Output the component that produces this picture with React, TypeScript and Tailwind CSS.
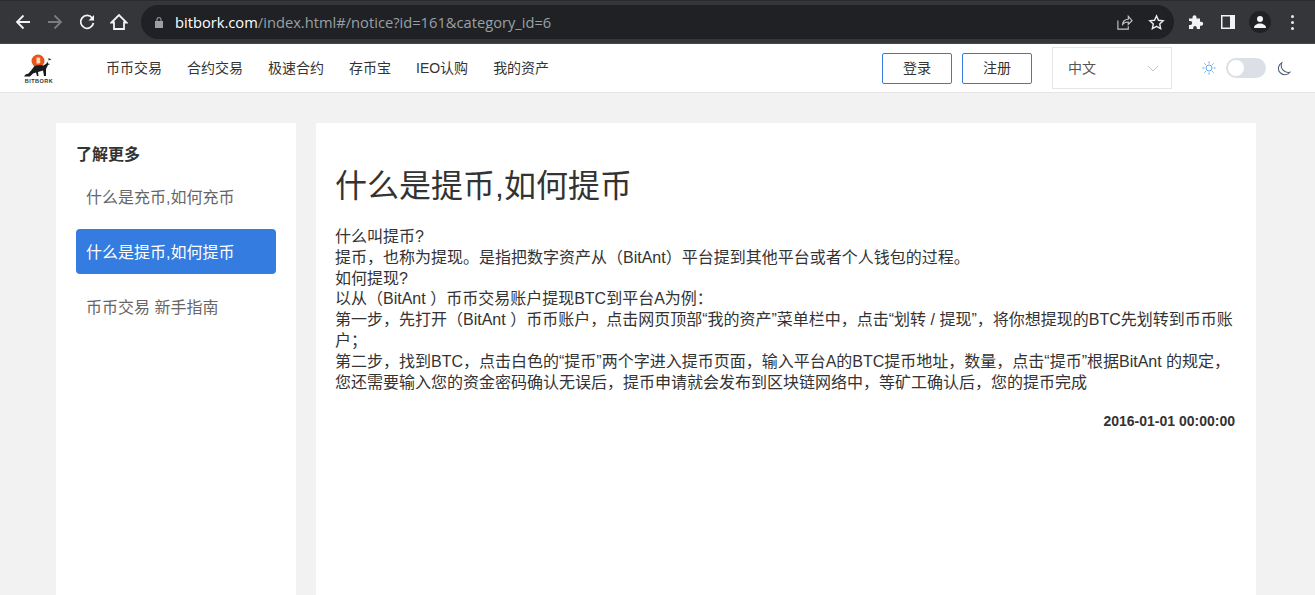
import React from "react";

const font = { fontFamily: '"Liberation Sans", "Noto Sans CJK SC", sans-serif' };

function Logo() {
  return (
    <div className="flex w-[30px] flex-col items-center">
      <svg width="30" height="24" viewBox="0 0 30 24">
        <circle cx="15" cy="8" r="6.500" fill="#e8551c" />
        <path d="M13.500 4.500h2.500a1.500 1.500 0 0 1 .6 2.800 1.700 1.700 0 0 1-.6 3.200h-2.500z" fill="#ffd9b8" />
        <path d="M1 23.500h6l3-3 3-1 1 3.500h1.500l-.5-4 5-1.500 1 5.500h2V16l2-4 2-1-2-.5-.5-2-1 2-3 2-4-.5-5 1-3 4-3 3.500-3 1z" fill="#1a1a1a" />
        <path d="M25.500 9V5l3 1.500-3 1z" fill="#333" />
      </svg>
      <span className="mt-[1px] pl-[2px] text-[5.500px] leading-[6px] font-bold tracking-[0.5px] whitespace-nowrap text-[#333]">BITBORK</span>
    </div>
  );
}

function Slot({ children }: { children: React.ReactNode }) {
  return <div className="flex h-[32px] w-[32px] items-center justify-center">{children}</div>;
}

function ChromeBar() {
  return (
    <div className="flex h-[44px] items-center border-t border-t-[#2a2b2e] border-b border-b-[#47484b] bg-[#35363a]">
      <div className="flex w-[141px] items-center pl-[7px]">
        <Slot><svg width="16" height="16" viewBox="0 0 16 16" fill="none" stroke="#f1f3f4" strokeWidth="1.800"><path d="M15 8H2M8.500 1.500 2 8l6.500 6.500" /></svg></Slot>
        <Slot><svg width="16" height="16" viewBox="0 0 16 16" fill="none" stroke="#7b7c7f" strokeWidth="1.800"><path d="M1 8h13M7.500 1.500 14 8l-6.500 6.500" /></svg></Slot>
        <Slot><svg width="16" height="16" viewBox="0 0 16 16" fill="none" stroke="#f1f3f4" strokeWidth="1.800"><path d="M13.200 4A6.400 6.400 0 1 0 14.400 9" /><path d="M15 1v5.500H9.500z" fill="#f1f3f4" stroke="none" /></svg></Slot>
        <Slot><svg width="18" height="18" viewBox="0 0 18 18" fill="none" stroke="#f1f3f4" strokeWidth="1.800"><path d="M1.500 9.500 9 2l7.500 7.500H14V16H4V9.500z" /></svg></Slot>
      </div>
      <div className="flex h-[34px] w-[1033px] items-center rounded-full bg-[#202124]">
        <svg className="ml-[11px]" width="14" height="14" viewBox="0 0 14 14" fill="#9aa0a6"><path d="M3 6h8v7H3zM4.500 6V4.500a2.500 2.500 0 0 1 5 0V6H8.500V4.500a1.500 1.500 0 0 0-3 0V6z" /></svg>
        <span className="ml-[9px] text-[14.7px] text-[#9aa0a6]" style={{ fontFamily: '"Open Sans", "Liberation Sans", sans-serif' }}>
          <span className="text-white">bitbork.com</span>/index.html#/notice?id=161&amp;category_id=6
        </span>
        <div className="ml-auto flex items-center gap-[15px] pr-[9px]">
          <svg width="17" height="17" viewBox="0 0 18 18" fill="none" stroke="#c4c7c9" strokeWidth="1.200"><path d="M2 7v9h11v-3M7 11c0-3 2.500-5.500 6-5.500V2.500l4 4.500-4 4V8.500c-3 0-5 1-6 2.500z" /></svg>
          <svg width="17" height="17" viewBox="0 0 18 18" fill="none" stroke="#e8eaed" strokeWidth="1.500"><path d="m9 2 2.100 4.600 5 .6-3.700 3.400 1 5L9 13.100 4.600 15.600l1-5L1.900 7.200l5-.6z" /></svg>
        </div>
      </div>
      <div className="flex flex-1 items-center pl-[6px]">
        <Slot><svg width="16" height="16" viewBox="0 0 16 16" fill="#f1f3f4"><path d="M1 4.500h3.500V3.200a2 2 0 1 1 4 0v1.300H12v3.300h1.200a2 2 0 1 1 0 4H12V15H8.800v-1.300a1.800 1.800 0 1 0-3.600 0V15H1v-4h1.200a2 2 0 1 0 0-4H1z" /></svg></Slot>
        <Slot><svg width="14" height="14" viewBox="0 0 14 14"><rect width="14" height="14" fill="#f1f3f4" /><rect x="1.500" y="1.500" width="7.500" height="11" fill="#35363a" /></svg></Slot>
        <Slot>
          <div className="flex h-[22px] w-[22px] items-center justify-center rounded-full bg-[#202124]">
            <svg width="14" height="14" viewBox="0 0 14 14" fill="#f1f3f4"><circle cx="7" cy="4" r="3" /><path d="M1 13c0-3 3-4.500 6-4.500s6 1.500 6 4.500z" /></svg>
          </div>
        </Slot>
        <Slot>
          <div className="flex flex-col gap-[3px]">
            <span className="h-[3px] w-[3px] rounded-full bg-[#e8eaed]" />
            <span className="h-[3px] w-[3px] rounded-full bg-[#e8eaed]" />
            <span className="h-[3px] w-[3px] rounded-full bg-[#e8eaed]" />
          </div>
        </Slot>
      </div>
    </div>
  );
}

function Header() {
  const items = ["币币交易", "合约交易", "极速合约", "存币宝", "IEO认购", "我的资产"];
  return (
    <div className="flex h-[49px] items-center border-b border-[#e6e6e6] bg-white pl-[23px]">
      <Logo />
      <nav className="ml-[53px] flex gap-[25px] pt-[1px] text-[14px] text-[#333]">
        {items.map((t) => <span key={t}>{t}</span>)}
      </nav>
      <div className="ml-auto flex items-center pr-[24px]">
        <button className="h-[31px] w-[70px] rounded-[2px] border border-[#357ce1] text-[14px] text-[#333]">登录</button>
        <button className="ml-[10px] h-[31px] w-[70px] rounded-[2px] border border-[#357ce1] text-[14px] text-[#333]">注册</button>
        <div className="ml-[20px] flex h-[42px] w-[120px] items-center justify-between border border-[#e6e6e6] pr-[12px] pl-[15px] text-[14px] text-[#555]">
          <span>中文</span>
          <svg width="12" height="7" viewBox="0 0 12 7" fill="none" stroke="#c0c4cc" strokeWidth="1"><path d="m1 1 5 5 5-5" /></svg>
        </div>
        <svg className="ml-[30px]" width="14" height="14" viewBox="0 0 14 14" fill="none" stroke="#5ba8f0" strokeWidth="1"><circle cx="7" cy="7" r="3" /><path d="M7 .5v2M7 11.500v2M.5 7h2M11.500 7h2M2.400 2.400l1.400 1.400M10.200 10.200l1.400 1.400M2.400 11.600l1.400-1.400M10.200 3.800l1.400-1.400" /></svg>
        <div className="ml-[10px] flex h-[20px] w-[40px] items-center rounded-full bg-[#dcdfe6] pl-[2px]">
          <span className="h-[16px] w-[16px] rounded-full bg-white" />
        </div>
        <svg className="ml-[10px]" width="15" height="15" viewBox="0 0 14 14" fill="none" stroke="#4a5a78" strokeWidth="1"><path d="M5.500 1.500a6 6 0 1 0 7.500 9 6.500 6.500 0 0 1-7.500-9z" /></svg>
      </div>
    </div>
  );
}

export default function App() {
  return (
    <div className="flex h-[595px] w-[1315px] flex-col overflow-hidden bg-[#f2f2f2]" style={font}>
      <ChromeBar />
      <Header />
      <main className="flex flex-1 gap-[20px] pt-[30px] pl-[56px]">
        <aside className="w-[240px] bg-white px-[20px] pt-[21px]">
          <h3 className="text-[16px] leading-[22px] font-bold text-[#333]">了解更多</h3>
          <ul className="mt-[8px] flex flex-col gap-[10px] text-[16px] text-[#666]">
            <li className="flex h-[45px] items-center pt-[2px] pl-[10px]">什么是充币,如何充币</li>
            <li className="flex h-[45px] items-center rounded-[4px] bg-[#357ce1] pt-[2px] pl-[10px] text-white">什么是提币,如何提币</li>
            <li className="flex h-[45px] items-center pt-[2px] pl-[10px]">币币交易 新手指南</li>
          </ul>
        </aside>
        <article className="w-[940px] bg-white pt-[40px] pr-[21px] pl-[19px] text-[#333]">
          <h1 className="text-[32px] leading-[46px] text-[#333]">什么是提币,如何提币</h1>
          <div className="mt-[18px] text-[16px] leading-[20.800px]">
            <p>什么叫提币?</p>
            <p>提币，也称为提现。是指把数字资产从（BitAnt）平台提到其他平台或者个人钱包的过程。</p>
            <p>如何提现?</p>
            <p>以从（BitAnt ）币币交易账户提现BTC到平台A为例：</p>
            <p>第一步，先打开（BitAnt ）币币账户，点击网页顶部“我的资产”菜单栏中，点击“划转 / 提现”，将你想提现的BTC先划转到币币账户；</p>
            <p>第二步，找到BTC，点击白色的“提币”两个字进入提币页面，输入平台A的BTC提币地址，数量，点击“提币”根据BitAnt 的规定，您还需要输入您的资金密码确认无误后，提币申请就会发布到区块链网络中，等矿工确认后，您的提币完成</p>
          </div>
          <div className="mt-[18px] text-right text-[14px] leading-[20px] font-bold">2016-01-01 00:00:00</div>
        </article>
      </main>
    </div>
  );
}
